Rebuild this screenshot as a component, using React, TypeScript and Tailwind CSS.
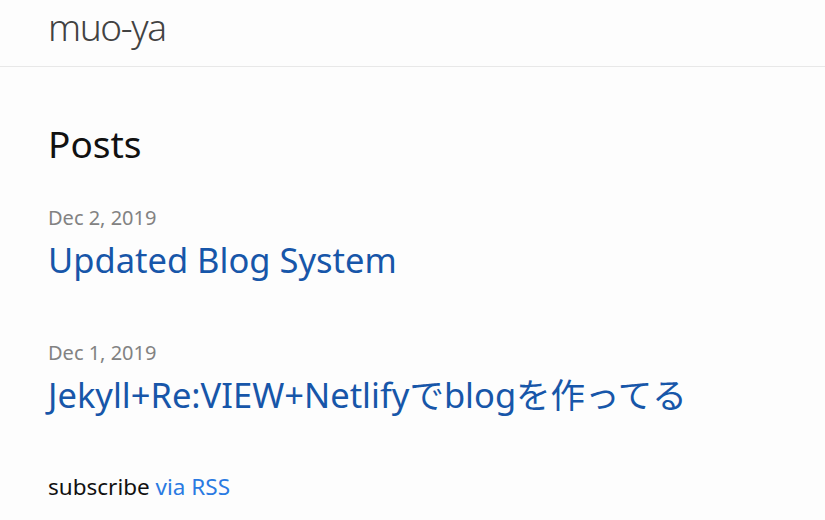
const posts = [
  { date: "Dec 2, 2019", title: "Updated Blog System" },
  { date: "Dec 1, 2019", title: "Jekyll+Re:VIEW+Netlifyでblogを作ってる" },
];

export default function App() {
  return (
    <div className="min-h-[520px] bg-[#fdfdfd] font-['Noto_Sans','Noto_Sans_CJK_JP',sans-serif] text-[#111111]">
      <header className="h-[67px] border-b border-[#e8e8e8] px-[48px]">
        <a className="block text-[37px] font-light leading-[54px] tracking-[-1.4px] text-[#424242]">muo-ya</a>
      </header>

      <main className="px-[48px]">
        <h1 className="mt-[52px] text-[37px] leading-[50px]">Posts</h1>
        <ul>
          {posts.map((post, i) => (
            <li key={post.title} className={i === 0 ? "mt-[35px]" : "mt-[57px]"}>
              <span className="block text-[20px] leading-[28px] text-[#828282]">{post.date}</span>
              <a className="mt-[6px] block text-[34.5px] leading-[44px] text-[#1756a9]">{post.title}</a>
            </li>
          ))}
        </ul>
        <p className="mt-[56px] text-[22.5px] leading-[28px]">
          subscribe <a className="text-[#2a7ae2]">via RSS</a>
        </p>
      </main>
    </div>
  );
}
